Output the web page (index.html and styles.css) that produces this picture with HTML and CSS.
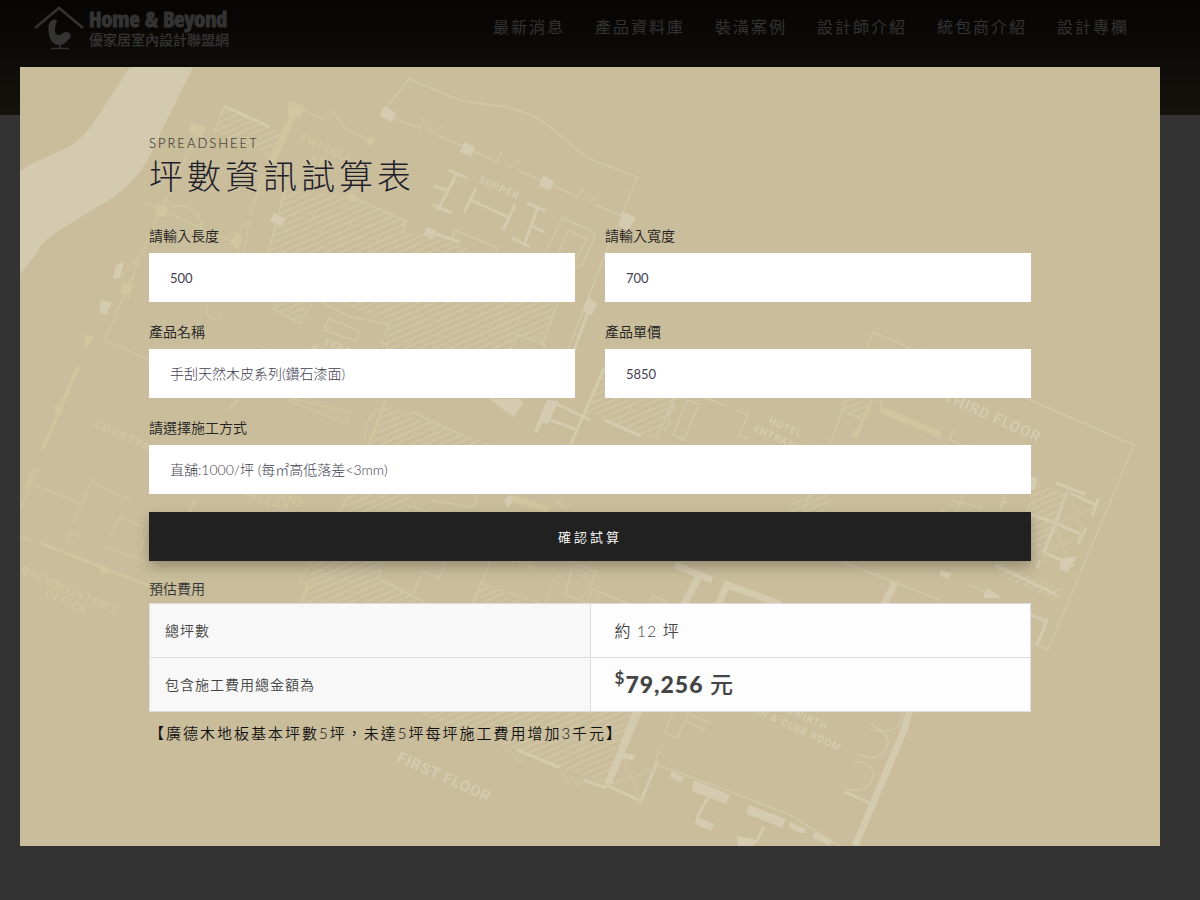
FILE: index.html
```html
<!DOCTYPE html>
<html lang="zh-Hant">
<head>
<meta charset="utf-8">
<meta name="viewport" content="width=device-width, initial-scale=1">
<title>坪數資訊試算表</title>
<link rel="stylesheet" href="styles.css">
</head>
<body>
<header class="site-header">
  <a class="brand" href="#">
    <svg class="brand-mark" viewBox="0 0 50 44" aria-hidden="true">
      <path d="M1 22 25 2 49 22" fill="none" stroke="currentColor" stroke-width="2.5"/>
      <path d="M16 16C18 13 22 13 23 15C21 20 20 25 22 28C26 32 29 25 32 26C36 26 38 30 36 32C33 35 31 39 25 39C19 39 16 34 15 28C14 24 14 19 16 16Z" fill="currentColor"/>
      <path d="M26 38v4M17 42.500h18" stroke="currentColor" stroke-width="1.500"/>
    </svg>
    <span class="brand-text">
      <span class="brand-en">Home &amp; Beyond</span>
      <span class="brand-zh">優家居室內設計聯盟網</span>
    </span>
  </a>
  <nav class="site-nav">
    <a href="#">最新消息</a>
    <a href="#">產品資料庫</a>
    <a href="#">裝潢案例</a>
    <a href="#">設計師介紹</a>
    <a href="#">統包商介紹</a>
    <a href="#">設計專欄</a>
  </nav>
</header>

<div class="overlay">
  <main class="modal" role="dialog" aria-labelledby="title">
    <svg class="plan" viewBox="20 67 1140 779" preserveAspectRatio="xMinYMin slice" aria-hidden="true">
      <defs>
        <pattern id="hatch" width="6" height="6" patternUnits="userSpaceOnUse" patternTransform="rotate(-24)">
          <path d="M0 3h6" class="hatch-line"/>
        </pattern>
      </defs>
      <path class="river" d="M130 67H193L150 155Q140 178 112 198L60 230Q42 241 36 254L20 275V171Q28 165 40 160L70 146Q83 138 94 122Z"/>

      <g class="hatched">
        <path d="M224 106 270 128 283 133 272 160 214 132Z"/>
        <path d="M283 190 350 196 406 221 403 234 430 231 498 262 558 300 543 342 517 334 510 350H380L390 325 345 305 268 253Z"/>
        <path d="M272 310 282 290 308 300 300 323Z"/>
        <path d="M604 366 680 398 656 440 585 412Z"/>
        <path d="M385 405 410 415 446 428 498 446H370Z"/>
        <path d="M345 495H410L405 513H335Z"/>
        <path d="M315 562H383L378 578 430 605H300Z"/>
        <path d="M480 583 530 605H470Z"/>
        <path d="M1030 480 1070 495 1045 560 1030 550Z"/>
        <path d="M1000 565 1068 590 1055 600 996 575Z"/>
        <path d="M842 398 872 400 860 418 839 409Z"/>
        <path d="M410 712H634L606 785 480 735Z"/>
        <path d="M800 495H832L822 515H780Z"/>
      </g>

      <g class="line">
        <path d="M385 110 409 79 455 98C480 108 505 100 540 120 565 135 575 155 600 163L637 177 622 215 605 255M605 255 560 370"/>
        <path d="M387 116 420 128 424 118M437 135 460 145 497 162 501 152M517 170 540 180 578 197 582 188M596 205 622 216"/>
        <path class="thin" d="M424 119 432 134 442 126M501 153 508 168 519 160M582 188 590 202 600 195"/>
        <path class="wall" d="M449 170 467 178M457 173 438 210M433 205 452 213M434 186 447 190M476 188 464 213M471 200 508 217M515 205 503 230M527 203 546 211M538 207 524 245M512 238 530 247M532 226 544 232"/>
        <path d="M545 254 562 218 590 230Q597 235 593 241L583 264Q580 268 575 265L545 254 557 257 568 230 587 239 577 258"/>
        <path d="M268 253 285 190M214 132 224 106M350 196 406 221 403 234M452 238 455 230 498 248 495 255"/>
        <path class="wall" d="M224 106 270 127M430 232 460 242"/>
        <path d="M273 309 282 285M273 309 300 324 312 303M310 296 348 316 389 325 385 334M329 319 360 331 355 341 324 330ZM380 342 388 345 375 368"/>
        <path d="M558 303 542 345M510 350 518 335 545 345 543 350"/>
        <path class="wall" d="M589 310 574 350M604 368 570 446M557 404 590 420M604 420 641 436M545 418 578 430"/>
        <path d="M410 415 413 412 446 428 461 435M674 398 656 440M672 400 674 408 668 414 670 424 664 430M687 400 699 404 684 440 673 435Z"/>
        <path d="M699 395 726 406M737 410 748 415 739 435 748 438"/>
        <path d="M800 520 873 332 1134 445 1048 650 1030 642"/>
        <path d="M839 409 862 419M880 400 882 411 886 412M953 430 950 440 970 448"/>
        <path class="wall" d="M1056 483 1085 494M1068 490 1043 555M1070 493 1098 506M1098 499 1092 516M1030 514 1055 523 1083 535M1086 528 1078 544M1043 552 1074 566M995 565 1057 595M1040 560 1037 568"/>
        <path class="thin" d="M1068 490 1058 523 1098 506M1070 493 1083 535M1083 535 1043 555M1055 523 1068 560"/>
        <path d="M950 500 982 508 980 514M963 495 955 515M1005 495 1000 512M1010 500 1000 505M940 510 950 514"/>
        <path d="M845 563 940 600M1030 505 1000 565M970 585 985 592"/>
        <path class="heavy" d="M895 583 884 604 870 640"/>
        <path class="wall" d="M1030 615 1048 622M1047 618 1044 628 1037 645"/>
        <path class="wall" d="M634 712 606 785 641 801 657 762M584 780 606 788"/>
        <path class="thin" d="M606 785 655 770M622 752 640 801"/>
        <path class="heavy" d="M639 710 608 784"/>
        <path d="M655 765 658 752 664 755M657 765 680 773 700 780 790 815 840 846M673 712 665 733 677 738 690 710M690 715 711 723M686 721 705 730"/>
        <path class="wall" d="M709 796 698 815 697 820 713 827M764 826 757 841 738 838M516 749 560 768"/>
        <path class="thin" d="M502 745 506 752 510 749 520 763 525 752M561 770 568 783 572 778 578 786 584 778M665 742 660 752"/>
        <path class="heavy" d="M913 700 904 730 855 846"/>
        <path class="wall" d="M845 792 870 803"/>
        <path d="M903 712C900 735 880 735 871 723M869 731C900 725 890 770 858 754M855 762C885 760 875 800 845 788"/>
        <path class="heavy" d="M675 565 712 580M698 578 680 612M780 604 727 585 718 605"/>
        <path d="M573 565 565 594 590 605M578 564 596 572 589 588 632 605M490 563 472 605M446 562 439 578 423 571 413 594M383 562 378 578 430 605M405 513 410 506 432 513M430 500 474 508 477 495M650 605 653 596 668 602"/>
        <path class="thin" d="M578 570 592 576M577 574 590 580M587 590 581 602M592 592 586 605M599 595 593 608M555 495 560 507 570 506M548 565 560 574 550 582"/>
      </g>

      <g class="block">
        <path d="M384 106 396 113 392 122 380 116ZM464 142 475 147 471 157 460 152ZM543 176 554 181 550 191 539 186ZM622 211 636 218 628 230 619 226ZM274 213 286 219 280 226 270 221ZM426 227 436 230 432 239 424 235ZM588 296 597 304 592 315 583 311Z"/>
        <path d="M490 399H520L523 403 514 417 505 411ZM547 400 559 401 548 424 542 423 537 433 534 431ZM116 265 124 262 120 278 113 279ZM101 300 112 302 106 315 99 312Z"/>
        <path d="M694 780 730 795 726 804 692 791ZM748 805 786 819 782 828 747 814ZM671 771 684 777 681 782 670 777ZM698 817 714 824 711 831 695 824ZM737 836 756 841 753 846H738ZM815 832 832 841 829 845 812 838ZM790 822 806 829 804 834 789 828Z"/>
        <path d="M620 752 636 755 633 760 620 758ZM940 570 952 573 948 579 940 576ZM987 588 1002 598H983ZM1060 559 1077 556 1067 573 1060 568ZM1030 476 1038 478 1034 490H1030ZM504 500 510 495 516 498 508 508Z"/>
      </g>

      <g class="line warm">
        <path class="heavy" d="M297 106 271 163M880 409 941 435M513 498 548 510"/>
        <path d="M303 110 327 121 333 111M345 129 370 140M198 133 159 214 120 305 105 340 149 360M180 218 145 203M160 210 187 222 238 244M263 177 250 215 245 213M120 278 138 257 128 300M105 340 130 280"/>
        <path class="thin" d="M333 111 342 123 345 129M170 207C190 200 205 218 200 230M239 230 249 221 243 260M207 305C205 318 215 325 222 312M550 510 560 500 565 510 570 505M312 562 300 580 308 585"/>
        <path d="M80 365 43 450M38 468 20 510M28 482 82 504 73 523M82 503 95 475M95 484 129 499M71 532 62 550M69 531 80 537M125 510 110 535M119 517 147 528 140 550M107 547 160 568M20 536 32 541M480 583 545 605 552 588"/>
        <path class="wall" d="M77 368 42 450M34 469 26 487M40 543 149 586M195 500 185 520M386 400 368 446M872 400 855 438M238 400 228 410M350 495 338 513M308 585 300 605"/>
        <path d="M256 345 290 358M290 398 350 412 346 424 288 400"/>
        <path d="M365 440C363 425 373 410 380 408"/>
      </g>
      <g class="block warm">
        <path d="M191 122 207 127 202 137 189 134ZM290 101 305 106 300 118 287 113ZM157 204 168 208 165 217 156 215ZM124 283 133 286 129 296 120 293ZM236 232 243 236 238 250 230 244ZM84 334 94 336 88 346 85 349ZM370 136 376 140 371 146 366 142ZM55 404 64 407 60 416 55 413ZM100 568 108 571 104 575 100 573ZM853 430 861 431 857 438 851 437ZM350 192 356 196 351 201 347 197Z"/>
      </g>
      <g class="plan-rings">
        <circle cx="302" cy="402" r="5"/><circle cx="315" cy="406" r="5"/><circle cx="328" cy="411" r="5"/><circle cx="341" cy="416" r="5"/>
      </g>

      <g class="plan-label">
        <text transform="translate(478 182) rotate(24)" font-size="10">SUPPER</text>
        <text transform="translate(396 761) rotate(24)" font-size="15">FIRST FLOOR</text>
        <text transform="translate(943 400) rotate(24)" font-size="15">THIRD FLOOR</text>
        <text transform="translate(768 423) rotate(24)" font-size="10">HOTEL</text>
        <text transform="translate(753 431) rotate(24)" font-size="10">ENTRANCE</text>
        <text transform="translate(758 700) rotate(24)" font-size="10">BREWSWIRTH</text>
        <text transform="translate(738 706) rotate(24)" font-size="10">KAHN &amp; CLUB ROOM</text>
        <text transform="translate(323 344) rotate(24)" font-size="10">EXPO</text>
        <text transform="translate(311 350) rotate(24)" font-size="10">KITCHEN</text>
      </g>
      <g class="plan-label warm">
        <text transform="translate(298 140) rotate(24)" font-size="12">SWIGGLE</text>
        <text transform="translate(309 161) rotate(24)" font-size="12">KEG</text>
        <text transform="translate(93 427) rotate(24)" font-size="12">COURTYARD</text>
        <text transform="translate(20 573) rotate(24)" font-size="12">BREWMEISTER’S</text>
        <text transform="translate(44 596) rotate(24)" font-size="12">OFFICE</text>
        <text transform="translate(224 474) rotate(24)" font-size="12">RESTAURANT</text>
        <text transform="translate(242 494) rotate(24)" font-size="12">CELLAR</text>
        <text transform="translate(500 557) rotate(24)" font-size="12">ROOM</text>
      </g>
    </svg>

    <form class="calc">
      <p class="eyebrow">SPREADSHEET</p>
      <h1 class="title" id="title">坪數資訊試算表</h1>
      <div class="fields">
        <div class="field">
          <label for="length">請輸入長度</label>
          <input id="length" type="text" inputmode="numeric" value="500">
        </div>
        <div class="field">
          <label for="width">請輸入寬度</label>
          <input id="width" type="text" inputmode="numeric" value="700">
        </div>
        <div class="field">
          <label for="product">產品名稱</label>
          <select id="product"><option>手刮天然木皮系列(鑽石漆面)</option></select>
        </div>
        <div class="field">
          <label for="price">產品單價</label>
          <input id="price" type="text" inputmode="numeric" value="5850">
        </div>
        <div class="field field-wide">
          <label for="method">請選擇施工方式</label>
          <select id="method"><option>直舖:1000/坪 (每㎡高低落差&lt;3mm)</option></select>
        </div>
      </div>
      <button class="submit" type="button">確認試算</button>
      <table class="result">
        <caption>預估費用</caption>
        <tbody>
          <tr><th scope="row">總坪數</th><td>約 12 坪</td></tr>
          <tr><th scope="row">包含施工費用總金額為</th><td class="total"><sup>$</sup>79,256 <span class="unit">元</span></td></tr>
        </tbody>
      </table>
      <p class="note">【廣德木地板基本坪數5坪，未達5坪每坪施工費用增加3千元】</p>
    </form>
  </main>
</div>
</body>
</html>
```
FILE: styles.css
```css
* {
  box-sizing: border-box;
}

body {
  margin: 0;
  min-height: 100vh;
  background: #fff;
  color: #222;
  font-family: Lato, "Noto Sans CJK TC", sans-serif;
  font-weight: 350;
}

.site-header {
  display: flex;
  justify-content: space-between;
  align-items: flex-start;
  min-height: 115px;
  padding: 6px 71px 0 34px;
  background: linear-gradient(#1e1a14, #665c40);
  color: #fff;
}

.site-header a {
  color: inherit;
  text-decoration: none;
}

.brand {
  display: flex;
  align-items: center;
  gap: 5px;
}

.brand-mark {
  width: 50px;
  height: 44px;
}

.brand-text {
  display: flex;
  flex-direction: column;
}

.brand-en {
  font: 700 22px/24px "Liberation Sans Narrow", "Open Sans Condensed", "DejaVu Sans Condensed", sans-serif;
  -webkit-text-stroke: 1px currentColor;
}

.brand-zh {
  font-size: 14px;
  line-height: 20px;
  font-weight: 500;
}

.site-nav {
  display: flex;
  gap: 30px;
  font-size: 16px;
  line-height: 42px;
  letter-spacing: 2px;
}

.overlay {
  position: fixed;
  inset: 0;
  overflow: auto;
  padding: 67px 40px 54px 20px;
  background: rgba(0, 0, 0, 0.8);
}

.modal {
  position: relative;
  min-height: 779px;
  padding: 66px 129px 90px;
  overflow: hidden;
  background: #c9bd9b;
}

.plan {
  position: absolute;
  inset: 0;
  width: 100%;
  height: 100%;
}

.river {
  fill: #d4cab0;
}

.hatched {
  fill: url(#hatch);
}

.hatch-line {
  stroke: #cfc4a4;
  stroke-width: 2;
}

.line {
  fill: none;
  stroke: #d1c7aa;
  stroke-width: 1.5;
}

.line .thin {
  stroke: #cec3a3;
}

.line .wall {
  stroke: #d4caae;
  stroke-width: 3;
}

.line .heavy {
  stroke: #d4caae;
  stroke-width: 7;
}

.block {
  fill: #d5cbb0;
}

.line.warm,
.line.warm path {
  stroke: #d1c59f;
}

.block.warm {
  fill: #d2c6a0;
}

.plan-rings {
  fill: none;
  stroke: #cfc39e;
}

.plan-label {
  fill: #d5cbb0;
  font-family: Roboto, sans-serif;
  font-weight: 700;
  letter-spacing: 1px;
}

.plan-label.warm {
  fill: #d1c59f;
}

.calc {
  position: relative;
}

.eyebrow {
  margin: 0;
  font-size: 13px;
  line-height: 20px;
  letter-spacing: 2px;
}

.title {
  margin: 0 0 25px;
  color: #1e212c;
  font-size: 34px;
  line-height: 46px;
  letter-spacing: 4px;
  font-weight: 300;
}

.fields {
  display: grid;
  grid-template-columns: 1fr 1fr;
  gap: 18px 30px;
}

.field {
  display: flex;
  flex-direction: column;
  gap: 5px;
}

.field-wide {
  grid-column: 1 / -1;
}

.field label,
.result caption {
  font-size: 14px;
  line-height: 24px;
}

.field input,
.field select {
  width: 100%;
  height: 49px;
  padding: 0 20px;
  border: 1px solid #fff;
  border-radius: 0;
  appearance: none;
  background: #fff;
  color: #3f4052;
  font: inherit;
  font-size: 14px;
}

.field input {
  font-size: 13px;
  font-weight: 400;
}

.field select {
  font-weight: 300;
}

.submit {
  display: block;
  width: 100%;
  height: 49px;
  margin: 18px 0 16px;
  border: 0;
  background: #212121;
  box-shadow: 0 6px 12px rgba(0, 0, 0, 0.25);
  color: #fff;
  font: inherit;
  font-size: 13px;
  letter-spacing: 3px;
}

.result {
  width: 100%;
  border-collapse: collapse;
  table-layout: fixed;
  letter-spacing: 1px;
  color: #444;
}

.result caption {
  padding-bottom: 2px;
  text-align: left;
  letter-spacing: 0;
  color: #333;
}

.result th,
.result td {
  height: 54px;
  border: 1px solid #ddd;
  text-align: left;
}

.result th {
  padding: 0 15px 2px;
  background: #f8f8f8;
  font-size: 14px;
  font-weight: 350;
}

.result td {
  padding: 0 24px 2px;
  background: #fdfdfd;
  font-size: 16px;
}

.result .total {
  font-size: 23px;
  line-height: 30px;
  font-weight: 900;
}

.total sup {
  font-size: 17px;
  line-height: 0;
  font-weight: 700;
}

.total .unit {
  font-weight: 500;
}

.note {
  margin: 8px 0 0;
  color: #111;
  font-size: 15px;
  line-height: 26px;
  letter-spacing: 2px;
}
```
